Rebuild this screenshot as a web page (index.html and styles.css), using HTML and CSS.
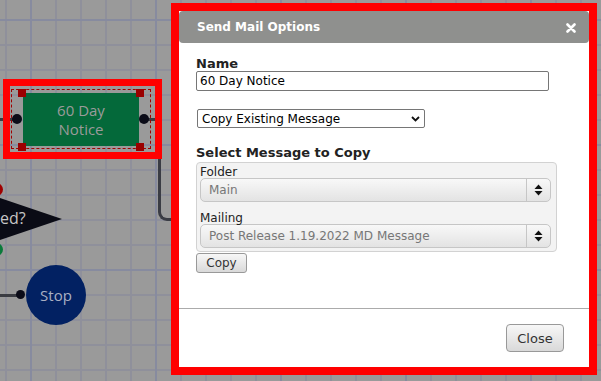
FILE: index.html
```html
<!DOCTYPE html>
<html lang="en">
<head>
    <meta charset="UTF-8">
    <title>Send Mail Options</title>
    <link rel="stylesheet" href="styles.css">
</head>
<body>

<div class="canvas">
    <!-- connectors -->
    <div class="wire wire-in"></div>
    <div class="wire wire-out"></div>
    <div class="wire wire-stop"></div>
    <div class="elbow"></div>

    <!-- decision node, cut off at the left edge -->
    <svg class="decision" width="70" height="70" viewBox="0 0 70 70">
        <polygon points="0,13 62,34 0,55" fill="#0a0b15"/>
    </svg>
    <div class="decision-label">ed?</div>
    <div class="port port-red"></div>
    <div class="port port-green"></div>

    <!-- selected task node -->
    <div class="sel-frame"></div>
    <div class="sel-dash"></div>
    <div class="task">
        <span class="task-line">60 Day</span>
        <span class="task-line">Notice</span>
    </div>
    <div class="handle h-tl"></div>
    <div class="handle h-tr"></div>
    <div class="handle h-bl"></div>
    <div class="handle h-br"></div>
    <div class="port port-left"></div>
    <div class="port port-right"></div>

    <!-- stop node -->
    <div class="port port-stop"></div>
    <div class="stop">Stop</div>

    <div class="dialog">
        <div class="dialog-title">
            <span>Send Mail Options</span>
            <svg class="close-x" width="10" height="10" viewBox="0 0 10 10">
                <path d="M1.5 1.5 L8.5 8.5 M8.5 1.5 L1.5 8.5" stroke="#fff" stroke-width="2.6" stroke-linecap="round"/>
            </svg>
        </div>

        <div class="dialog-body">
            <label class="field-label" for="mailName">Name</label>
            <input class="text-input" id="mailName" type="text" value="60 Day Notice">

            <div class="plain-select">
                <span>Copy Existing Message</span>
                <svg width="9" height="6" viewBox="0 0 9 6">
                    <path d="M1 1 L4.5 4.5 L8 1" fill="none" stroke="#111" stroke-width="1.8"/>
                </svg>
            </div>

            <h3 class="section-title">Select Message to Copy</h3>
            <div class="copy-box">
                <div class="box-label">Folder</div>
                <div class="jq-select">
                    <span class="jq-text">Main</span>
                    <span class="jq-arrows">
                        <svg width="9" height="12" viewBox="0 0 9 12">
                            <polygon points="4.5,0.5 8.5,5 0.5,5" fill="#111"/>
                            <polygon points="0.5,7 8.5,7 4.5,11.5" fill="#111"/>
                        </svg>
                    </span>
                </div>
                <div class="box-label box-label-gap">Mailing</div>
                <div class="jq-select">
                    <span class="jq-text">Post Release 1.19.2022 MD Message</span>
                    <span class="jq-arrows">
                        <svg width="9" height="12" viewBox="0 0 9 12">
                            <polygon points="4.5,0.5 8.5,5 0.5,5" fill="#111"/>
                            <polygon points="0.5,7 8.5,7 4.5,11.5" fill="#111"/>
                        </svg>
                    </span>
                </div>
            </div>
            <button class="btn btn-copy">Copy</button>
        </div>

        <div class="dialog-footer">
            <button class="btn btn-close">Close</button>
        </div>
    </div>
</div>

</body>
</html>
```

FILE: styles.css
```css
body {
    margin: 0;
    width: 601px;
    height: 381px;
    overflow: hidden;
    font-family: "DejaVu Sans", Verdana, sans-serif;
    background-color: #9a9a9a;
    background-image:
        linear-gradient(to right, #878b9f 2px, transparent 2px),
        linear-gradient(to bottom, #878b9f 2px, transparent 2px),
        linear-gradient(to right, #8f909b 2px, transparent 2px),
        linear-gradient(to bottom, #8f909b 2px, transparent 2px);
    background-size: 125px 100%, 100% 125px, 25px 100%, 100% 25px;
    background-position: 30px 0, 0 19px, 5px 0, 0 19px;
}

.canvas {
    position: relative;
    width: 601px;
    height: 381px;
}

/* ---- diagram ---- */
.wire {
    position: absolute;
    height: 3px;
    background: #3a3c42;
}
.wire-in { left: 0; top: 118px; width: 14px; }
.wire-out { left: 148px; top: 118px; width: 8px; }
.wire-stop { left: 0; top: 294px; width: 18px; }

.elbow {
    position: absolute;
    left: 158px;
    top: 159px;
    width: 20px;
    height: 59px;
    border-left: 3px solid #3a3c44;
    border-bottom: 3px solid #3a3c44;
    border-bottom-left-radius: 9px;
}

.decision {
    position: absolute;
    left: 0;
    top: 185px;
}
.decision-label {
    position: absolute;
    left: 0;
    top: 208px;
    font: 16px/20px "Open Sans", sans-serif;
    color: #c6c6c6;
}

.port {
    position: absolute;
    width: 10px;
    height: 10px;
    border-radius: 50%;
    background: #0b0c18;
}
.port-red { left: -10px; top: 183px; width: 13px; height: 13px; background: #a00000; }
.port-green { left: -10px; top: 243px; width: 13px; height: 13px; background: #0a7a3a; }
.port-left { left: 12px; top: 114px; }
.port-right { left: 139px; top: 114px; }
.port-stop { left: 16px; top: 290px; width: 9px; height: 9px; }

.sel-frame {
    position: absolute;
    left: 3px;
    top: 79px;
    width: 159px;
    height: 80px;
    box-sizing: border-box;
    border: 7px solid #ff0000;
}
.sel-dash {
    position: absolute;
    left: 11px;
    top: 89px;
    width: 140px;
    height: 60px;
    box-sizing: border-box;
    border: 1.5px dashed #a00000;
}
.task {
    position: absolute;
    left: 23px;
    top: 93px;
    width: 116px;
    height: 53px;
    background: #04693a;
    display: flex;
    flex-direction: column;
    align-items: center;
    justify-content: center;
    gap: 1px;
    color: #9b9b9b;
    font: 15px/18px "Open Sans", sans-serif;
}
.task-line {
    display: block;
}
.handle {
    position: absolute;
    width: 8px;
    height: 8px;
    background: #9a0000;
}
.h-tl { left: 18px; top: 89px; }
.h-tr { left: 136px; top: 89px; }
.h-bl { left: 18px; top: 143px; }
.h-br { left: 136px; top: 143px; }

.stop {
    position: absolute;
    left: 26px;
    top: 265px;
    width: 60px;
    height: 60px;
    border-radius: 50%;
    background: #022162;
    display: flex;
    align-items: center;
    justify-content: center;
    color: #a9b0c3;
    font: 15px/18px "Open Sans", sans-serif;
}

/* ---- dialog ---- */
.dialog {
    position: absolute;
    left: 171px;
    top: 3px;
    width: 426px;
    height: 372px;
    box-sizing: border-box;
    border: 8px solid #ff0000;
    background: #fff;
    display: flex;
    flex-direction: column;
}

.dialog-title {
    height: 32px;
    flex-shrink: 0;
    display: flex;
    align-items: center;
    justify-content: space-between;
    padding: 0 13px 0 18px;
    background: #8f908e;
    border-radius: 4px;
    color: #fff;
    font-size: 12px;
    font-weight: bold;
}
.close-x {
    margin-top: 1px;
}

.dialog-body {
    flex: 1;
    padding: 13px 17px 0;
}

.field-label {
    display: block;
    font-size: 13px;
    line-height: 15px;
    font-weight: bold;
    color: #222;
}

.text-input {
    display: block;
    width: 353px;
    height: 20px;
    margin: 0;
    padding: 0 3px;
    box-sizing: border-box;
    border: 1px solid #767676;
    border-radius: 2px;
    font-family: "DejaVu Sans", Verdana, sans-serif;
    font-size: 12px;
    color: #000;
}

.plain-select {
    width: 228px;
    height: 19px;
    margin: 18px 0 0 1px;
    padding: 0 4px 0 4px;
    box-sizing: border-box;
    border: 1px solid #767676;
    border-radius: 2px;
    display: flex;
    align-items: center;
    justify-content: space-between;
    font-size: 12px;
    color: #000;
}

.section-title {
    margin: 17px 0 0;
    font-size: 13px;
    line-height: 16px;
    color: #222;
}

.copy-box {
    width: 361px;
    margin-top: 1px;
    padding: 3px 5px 3px 3px;
    box-sizing: border-box;
    border: 1px solid #d2d2d2;
    border-radius: 4px;
    background: #f3f3f3;
}

.box-label {
    font-size: 12px;
    line-height: 12px;
    color: #222;
}
.box-label-gap {
    margin-top: 10px;
}

.jq-select {
    height: 24px;
    box-sizing: border-box;
    border: 1px solid #c6c6c6;
    border-radius: 5px;
    background: linear-gradient(#f8f8f8, #e3e3e3);
    display: flex;
    align-items: stretch;
}
.jq-text {
    flex: 1;
    display: flex;
    align-items: center;
    padding-left: 8px;
    font-size: 12px;
    color: #777;
}
.jq-arrows {
    width: 23px;
    border-left: 1px solid #c6c6c6;
    display: flex;
    align-items: center;
    justify-content: center;
}

.btn {
    display: block;
    box-sizing: border-box;
    border: 1px solid #999;
    background: linear-gradient(#f7f7f7, #d9d9d9);
    color: #333;
    font-family: "DejaVu Sans", Verdana, sans-serif;
    padding: 0;
    cursor: pointer;
}
.btn-copy {
    width: 51px;
    height: 20px;
    margin-top: 1px;
    border-radius: 3px;
    font-size: 12px;
}

.dialog-footer {
    border-top: 1px solid #ababab;
    padding: 15px 25px 15px 0;
    display: flex;
    justify-content: flex-end;
}
.btn-close {
    width: 58px;
    height: 28px;
    border-radius: 4px;
    font-size: 13px;
}
```
